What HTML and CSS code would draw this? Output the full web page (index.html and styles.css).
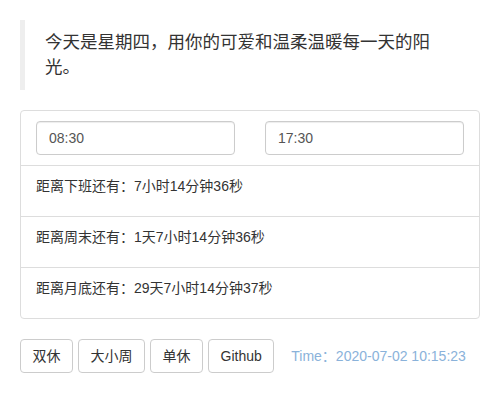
FILE: index.html
```html
<!DOCTYPE html>
<html lang="zh-CN">
<head>
    <meta charset="UTF-8">
    <meta name="viewport" content="width=device-width, initial-scale=1.0">
    <title>下班倒计时</title>
    <link rel="stylesheet" href="styles.css">
</head>
<body>
    <div class="container">
        <blockquote class="quote">
            <p>今天是星期四，用你的可爱和温柔温暖每一天的阳光。</p>
        </blockquote>

        <div class="panel">
            <div class="panel-body">
                <input type="text" class="form-control" value="08:30">
                <input type="text" class="form-control" value="17:30">
            </div>
            <ul class="list-group">
                <li class="list-group-item">距离下班还有：7小时14分钟36秒</li>
                <li class="list-group-item">距离周末还有：1天7小时14分钟36秒</li>
                <li class="list-group-item">距离月底还有：29天7小时14分钟37秒</li>
            </ul>
        </div>

        <div class="toolbar">
            <button class="btn">双休</button>
            <button class="btn">大小周</button>
            <button class="btn">单休</button>
            <button class="btn">Github</button>
            <span class="time">Time：2020-07-02 10:15:23</span>
        </div>
    </div>
</body>
</html>
```

FILE: styles.css
```css
* {
    margin: 0;
    padding: 0;
    box-sizing: border-box;
}

body {
    font-family: "Liberation Sans", Arial, "Noto Sans CJK SC", sans-serif;
    font-size: 14px;
    line-height: 20px;
    color: #333;
    background: #fff;
}

.container {
    padding: 20px;
}

.quote {
    border-left: 5px solid #eee;
    padding: 10px 20px;
    margin: 0 20px 20px 0;
    font-size: 17.5px;
    line-height: 25px;
}

.panel {
    border: 1px solid #ddd;
    border-radius: 4px;
    margin-bottom: 20px;
}

.panel-body {
    display: grid;
    grid-template-columns: 1fr 1fr;
    gap: 30px;
    padding: 10px 15px;
}

.form-control {
    height: 34px;
    padding: 6px 12px;
    font-family: inherit;
    font-size: 14px;
    color: #555;
    border: 1px solid #ccc;
    border-radius: 4px;
    box-shadow: inset 0 1px 1px rgba(0, 0, 0, 0.075);
    width: 100%;
}

.list-group {
    list-style: none;
}

.list-group-item {
    border-top: 1px solid #ddd;
    padding: 10px 15px 20px;
}

.toolbar {
    display: flex;
    align-items: center;
    gap: 5px;
}

.btn {
    height: 34px;
    padding: 6px 11.5px;
    font-family: inherit;
    font-size: 14px;
    line-height: 20px;
    color: #333;
    background: #fff;
    border: 1px solid #ccc;
    border-radius: 4px;
    cursor: pointer;
}

.time {
    margin-left: 12px;
    color: #8ab2da;
}
```
